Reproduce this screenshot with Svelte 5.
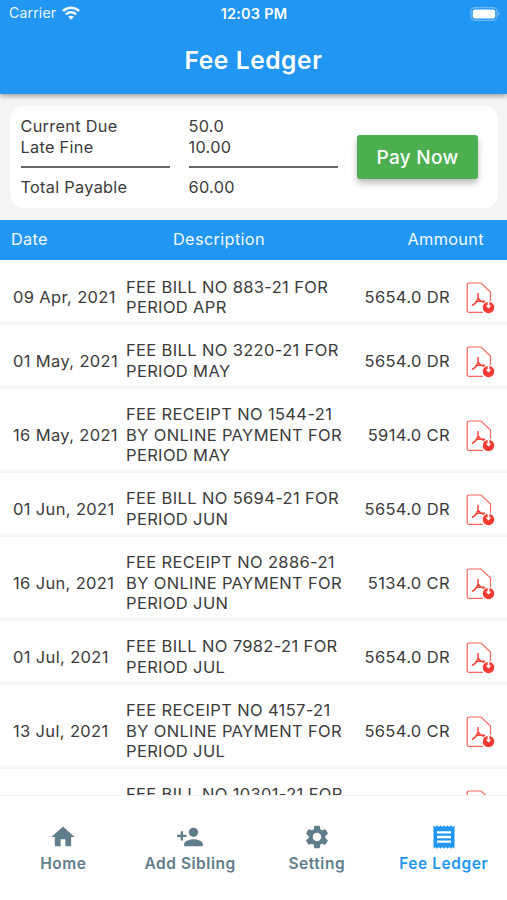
<script>
  const dues = [
    { label: 'Current Due', value: '50.0' },
    { label: 'Late Fine', value: '10.00' }
  ];

  const entries = [
    { date: '09 Apr, 2021', lines: ['FEE BILL NO 883-21 FOR', 'PERIOD APR'], amount: '5654.0 DR' },
    { date: '01 May, 2021', lines: ['FEE BILL NO 3220-21 FOR', 'PERIOD MAY'], amount: '5654.0 DR' },
    { date: '16 May, 2021', lines: ['FEE RECEIPT NO 1544-21', 'BY ONLINE PAYMENT FOR', 'PERIOD MAY'], amount: '5914.0 CR' },
    { date: '01 Jun, 2021', lines: ['FEE BILL NO 5694-21 FOR', 'PERIOD JUN'], amount: '5654.0 DR' },
    { date: '16 Jun, 2021', lines: ['FEE RECEIPT NO 2886-21', 'BY ONLINE PAYMENT FOR', 'PERIOD JUN'], amount: '5134.0 CR' },
    { date: '01 Jul, 2021', lines: ['FEE BILL NO 7982-21 FOR', 'PERIOD JUL'], amount: '5654.0 DR' },
    { date: '13 Jul, 2021', lines: ['FEE RECEIPT NO 4157-21', 'BY ONLINE PAYMENT FOR', 'PERIOD JUL'], amount: '5654.0 CR' },
    { date: '', lines: ['FEE BILL NO 10301-21 FOR', ''], amount: '' }
  ];

  const tabs = [
    { name: 'Home', icon: 'M10 20v-6h4v6h5v-8h3L12 3 2 12h3v8z' },
    {
      name: 'Add Sibling',
      icon: 'M15 12c2.21 0 4-1.79 4-4s-1.79-4-4-4-4 1.79-4 4 1.79 4 4 4zm-9-2V7H4v3H1v2h3v3h2v-3h3v-2H6zm9 4c-2.67 0-8 1.34-8 4v2h16v-2c0-2.66-5.33-4-8-4z'
    },
    {
      name: 'Setting',
      icon: 'M19.14 12.94c.04-.3.06-.61.06-.94 0-.32-.02-.64-.07-.94l2.03-1.58c.18-.14.23-.41.12-.61l-1.92-3.32c-.12-.22-.37-.29-.59-.22l-2.39.96c-.5-.38-1.03-.7-1.62-.94l-.36-2.54c-.04-.24-.24-.41-.48-.41h-3.84c-.24 0-.43.17-.47.41l-.36 2.54c-.59.24-1.13.57-1.62.94l-2.39-.96c-.22-.08-.47 0-.59.22L2.74 8.87c-.12.21-.08.47.12.61l2.03 1.58c-.05.3-.09.63-.09.94s.02.64.07.94l-2.03 1.58c-.18.14-.23.41-.12.61l1.92 3.32c.12.22.37.29.59.22l2.39-.96c.5.38 1.03.7 1.62.94l.36 2.54c.05.24.24.41.48.41h3.84c.24 0 .44-.17.47-.41l.36-2.54c.59-.24 1.13-.56 1.62-.94l2.39.96c.22.08.47 0 .59-.22l1.92-3.32c.12-.22.07-.47-.12-.61l-2.01-1.58zM12 15.6c-1.98 0-3.6-1.62-3.6-3.6s1.62-3.6 3.6-3.6 3.6 1.62 3.6 3.6-1.62 3.6-3.6 3.6z'
    },
    {
      name: 'Fee Ledger',
      icon: 'M18 17H6v-2h12v2zm0-4H6v-2h12v2zm0-4H6V7h12v2zM3 22l1.5-1.5L6 22l1.5-1.5L9 22l1.5-1.5L12 22l1.5-1.5L15 22l1.5-1.5L18 22l1.5-1.5L21 22V2l-1.5 1.5L18 2l-1.5 1.5L15 2l-1.5 1.5L12 2l-1.5 1.5L9 2 7.5 3.5 6 2 4.5 3.5 3 2v20z'
    }
  ];

  let active = $state('Fee Ledger');
</script>

<div class="screen">
  <header>
    <div class="status">
      <div class="carrier">
        <span>Carrier</span>
        <svg width="18" height="14" viewBox="0 0 18 14" fill="none" stroke="#fff" stroke-width="2.6">
          <path d="M1 5.1C5.4.7 12.6.7 17 5.1" />
          <path d="M3.9 8.3c2.8-2.8 7.4-2.8 10.2 0" />
          <path d="M9 13.8L6 10.800c1.600-1.500 4.400-1.500 6 0z" fill="#fff" stroke="none" />
        </svg>
      </div>
      <div class="clock">12:03 PM</div>
      <svg class="battery" width="31" height="14" viewBox="0 0 31 14">
        <rect x="1" y=".7" width="26" height="12.6" rx="3.8" fill="none" stroke="#fff" stroke-opacity=".35" stroke-width="1.2" />
        <rect x="2.8" y="2.5" width="22.4" height="9" rx="2.2" fill="#fff" />
        <path d="M28.5 4.8q2 2.2 0 4.4z" fill="#fff" fill-opacity=".5" />
      </svg>
    </div>
    <h1>Fee Ledger</h1>
  </header>

  <section class="summary">
    <div class="totals">
      <div class="column labels">
        {#each dues as due}
          <div>{due.label}</div>
        {/each}
        <hr />
        <div>Total Payable</div>
      </div>
      <div class="column values">
        {#each dues as due}
          <div>{due.value}</div>
        {/each}
        <hr />
        <div>60.00</div>
      </div>
    </div>
    <button class="pay" type="button">Pay Now</button>
  </section>

  <div class="tableHead">
    <span>Date</span>
    <span class="middle">Description</span>
    <span class="right">Ammount</span>
  </div>

  <main>
    {#each entries as entry}
      <div class="row">
        <div class="date">{entry.date}</div>
        <div class="description">
          {#each entry.lines as line}
            <div class="line">{line}</div>
          {/each}
        </div>
        <div class="amount">{entry.amount}</div>
        <svg class="pdf" width="30" height="32" viewBox="0 0 30 32" fill="none" stroke="#f8695f" stroke-width="1.2">
          <path d="M17 30.4H3.200Q1.200 30.4 1.200 28.4V3Q1.200 1 3.200 1H15L24.500 10V19" />
          <path d="M12 11.500v4.500M12 16c-.800 3-3 6-5.600 7.200M12 16c1.200 2 3 3.600 5.500 4.200M9.600 20c2-.900 5-1.400 9-.800" stroke="#f4483d" stroke-width="1.5" stroke-linecap="round" />
          <circle cx="22.500" cy="25.500" r="5.700" fill="#f23b30" stroke="none" />
          <path d="M21.600 20h1.800v3.500h2L22.500 26.600l-2.900-3.100h2z" fill="#fff" stroke="none" />
        </svg>
      </div>
    {/each}
  </main>

  <nav>
    {#each tabs as tab}
      <button class="tab" class:active={tab.name === active} type="button" onclick={() => (active = tab.name)}>
        <svg width="28" height="28" viewBox="0 0 24 24" fill="currentColor">
          <path d={tab.icon} />
        </svg>
        <span>{tab.name}</span>
      </button>
    {/each}
  </nav>
</div>

<style>
  :global(body) {
    margin: 0;
    background: #fff;
  }

  .screen {
    display: flex;
    flex-direction: column;
    height: 900px;
    overflow: hidden;
    background: #f4f4f6;
    color: #3b3b3b;
    font-family: Inter, 'Liberation Sans', sans-serif;
    font-size: 16.5px;
    letter-spacing: 0.35px;
    line-height: 20.8px;
  }

  header {
    flex: none;
    height: 94px;
    background: #2196f3;
    color: #fff;
    box-shadow: 0 2px 5px rgba(0, 0, 0, 0.36);
  }

  .status {
    display: grid;
    grid-template-columns: 1fr auto 1fr;
    align-items: center;
    height: 27px;
    padding: 0 6px 0 9px;
    font-size: 14px;
    letter-spacing: 0.2px;
  }

  .carrier {
    display: flex;
    align-items: center;
    gap: 6px;
    opacity: 0.92;
  }

  .clock {
    margin-left: -2px;
    padding-top: 1px;
    font-size: 14.5px;
    font-weight: 600;
  }

  .battery {
    justify-self: end;
  }

  h1 {
    margin: 17px 0 0;
    text-align: center;
    font-size: 24.5px;
    font-weight: 600;
    line-height: 32px;
    letter-spacing: 0.6px;
  }

  .summary {
    flex: none;
    display: flex;
    justify-content: space-between;
    height: 102px;
    margin: 12px 9px 11.5px 10px;
    box-sizing: border-box;
    padding: 10px 20px 0 10.5px;
    border-radius: 14px;
    background: #fff;
    font-size: 16.3px;
    letter-spacing: 0.3px;
  }

  .totals {
    display: flex;
    gap: 19px;
  }

  .column {
    width: 149px;
  }

  hr {
    height: 2px;
    margin: 8px 0 9px;
    border: 0;
    background: #666;
  }

  .pay {
    width: 121px;
    height: 44px;
    margin-top: 19px;
    padding: 0;
    border: 0;
    border-radius: 3px;
    background: #4caf50;
    box-shadow: 0 4px 6px rgba(0, 0, 0, 0.28);
    color: #fff;
    font: 500 19px Inter, 'Liberation Sans', sans-serif;
    letter-spacing: 0.3px;
  }

  .tableHead {
    flex: none;
    display: grid;
    grid-template-columns: 150px 1fr 150px;
    align-items: center;
    height: 40.5px;
    box-sizing: border-box;
    padding: 0 23px 1px 11px;
    background: #2196f3;
    color: #f4faff;
    font-size: 16.3px;
  }

  .middle {
    padding-left: 12px;
  }

  .right {
    text-align: right;
  }

  main {
    flex: 1;
    min-height: 0;
    overflow: hidden;
    padding-top: 1.6px;
    background: #fff;
  }

  .row {
    display: grid;
    grid-template-columns: 113px 225px 99px 1fr;
    align-items: center;
    padding: 15px 0 3px 13px;
    border-bottom: 4px solid #f6f6f7;
  }

  .date,
  .amount {
    white-space: nowrap;
  }

  .line {
    height: 20.8px;
    white-space: nowrap;
  }

  .amount {
    text-align: right;
  }

  .pdf {
    margin: 2px 0 0 16px;
  }

  nav {
    flex: none;
    display: grid;
    grid-template-columns: repeat(4, 1fr);
    height: 104px;
    border-top: 1px solid #f2f2f2;
    background: #fff;
  }

  .tab {
    display: flex;
    flex-direction: column;
    align-items: center;
    gap: 3px;
    padding: 27px 0 0;
    border: 0;
    background: none;
    color: #607d8b;
    font: 600 15.5px/20px Inter, 'Liberation Sans', sans-serif;
    letter-spacing: 0.55px;
    white-space: nowrap;
  }

  .tab.active {
    color: #2196f3;
  }
</style>
